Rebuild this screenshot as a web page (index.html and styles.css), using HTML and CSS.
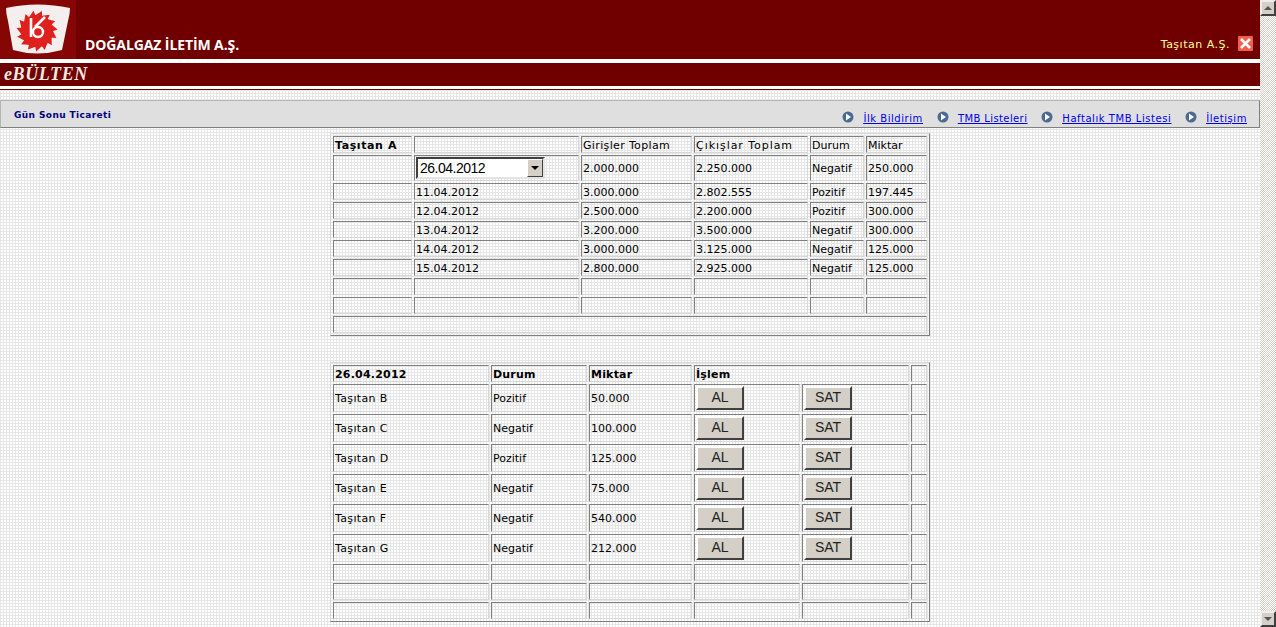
FILE: index.html
```html
<!DOCTYPE html>
<html lang="tr">
<head>
<meta charset="utf-8">
<title>eBÜLTEN</title>
<link rel="stylesheet" href="styles.css">
</head>
<body>
<div class="page">
  <header class="brand">
    <div class="logo">
      <svg width="76" height="59" viewBox="0 0 76 59">
        <rect width="76" height="59" fill="#860606"/>
        <path d="M6 8 Q37 1 70 8 Q70 14 68 21 L62 50 Q37 57 13 50 L8 21 Q6 14 6 8Z" fill="#f4eeee"/>
        <g fill="#e0201c" transform="translate(37 31)">
          <circle r="16"/>
          <path d="M-3 -15 L5 -20 L5 -14Z"/>
          <path d="M-3 -15 L5 -20 L5 -14Z" transform="rotate(24)"/>
          <path d="M-3 -15 L5 -20 L5 -14Z" transform="rotate(48)"/>
          <path d="M-3 -15 L5 -20 L5 -14Z" transform="rotate(72)"/>
          <path d="M-3 -15 L5 -20 L5 -14Z" transform="rotate(96)"/>
          <path d="M-3 -15 L5 -20 L5 -14Z" transform="rotate(120)"/>
          <path d="M-3 -15 L5 -20 L5 -14Z" transform="rotate(144)"/>
          <path d="M-3 -15 L5 -20 L5 -14Z" transform="rotate(168)"/>
          <path d="M-3 -15 L5 -20 L5 -14Z" transform="rotate(192)"/>
          <path d="M-3 -15 L5 -20 L5 -14Z" transform="rotate(216)"/>
          <path d="M-3 -15 L5 -20 L5 -14Z" transform="rotate(240)"/>
          <path d="M-3 -15 L5 -20 L5 -14Z" transform="rotate(264)"/>
          <path d="M-3 -15 L5 -20 L5 -14Z" transform="rotate(288)"/>
          <path d="M-3 -15 L5 -20 L5 -14Z" transform="rotate(312)"/>
          <path d="M-3 -15 L5 -20 L5 -14Z" transform="rotate(336)"/>
        </g>
        <g fill="none" stroke="#fff">
          <path d="M31 18 V37" stroke-width="2.6"/>
          <circle cx="38" cy="32" r="5" stroke-width="2.4"/>
          <path d="M35 27 L45 17" stroke-width="2.6"/>
        </g>
      </svg>
    </div>
    <div class="brand-name">DOĞALGAZ İLETİM A.Ş.</div>
    <div class="user">
      <span class="user-name">Taşıtan A.Ş.</span>
      <svg class="close" width="15" height="15" viewBox="0 0 15 15">
        <rect width="15" height="15" rx="1" fill="#f0604c"/>
        <path d="M3 3 L12 12 M12 3 L3 12" stroke="#fff" stroke-width="2.6"/>
      </svg>
    </div>
  </header>
  <div class="title-bar"><span class="title">eBÜLTEN</span></div>
  <nav class="toolbar">
    <div class="toolbar-title">Gün Sonu Ticareti</div>
    <div class="links">
      <a class="link" href="#"><svg class="bullet" width="12" height="12" viewBox="0 0 12 12"><circle cx="6" cy="6" r="5.5" fill="#4a6a94"/><path d="M4 2.5 L9 6 L4 9.5Z" fill="#fff"/></svg><span>İlk Bildirim</span></a>
      <a class="link link-tight" href="#"><svg class="bullet" width="12" height="12" viewBox="0 0 12 12"><circle cx="6" cy="6" r="5.5" fill="#4a6a94"/><path d="M4 2.5 L9 6 L4 9.5Z" fill="#fff"/></svg><span>TMB Listeleri</span></a>
      <a class="link" href="#"><svg class="bullet" width="12" height="12" viewBox="0 0 12 12"><circle cx="6" cy="6" r="5.5" fill="#4a6a94"/><path d="M4 2.5 L9 6 L4 9.5Z" fill="#fff"/></svg><span>Haftalık TMB Listesi</span></a>
      <a class="link" href="#"><svg class="bullet" width="12" height="12" viewBox="0 0 12 12"><circle cx="6" cy="6" r="5.5" fill="#4a6a94"/><path d="M4 2.5 L9 6 L4 9.5Z" fill="#fff"/></svg><span>İletişim</span></a>
    </div>
  </nav>
  <main class="content">
    <table class="grid grid-top">
      <colgroup><col class="t1a"><col class="t1b"><col class="t1c"><col class="t1d"><col class="t1e"><col class="t1f"></colgroup>
      <tr><th class="name-head">Taşıtan A</th><td></td><td class="sum-in">Girişler Toplam</td><td class="sum-out">Çıkışlar Toplam</td><td>Durum</td><td>Miktar</td></tr>
      <tr class="select-row"><td></td><td><div class="select"><span class="select-value">26.04.2012</span><span class="select-arrow"></span></div></td><td>2.000.000</td><td>2.250.000</td><td>Negatif</td><td>250.000</td></tr>
      <tr><td></td><td>11.04.2012</td><td>3.000.000</td><td>2.802.555</td><td>Pozitif</td><td>197.445</td></tr>
      <tr><td></td><td>12.04.2012</td><td>2.500.000</td><td>2.200.000</td><td>Pozitif</td><td>300.000</td></tr>
      <tr><td></td><td>13.04.2012</td><td>3.200.000</td><td>3.500.000</td><td>Negatif</td><td>300.000</td></tr>
      <tr><td></td><td>14.04.2012</td><td>3.000.000</td><td>3.125.000</td><td>Negatif</td><td>125.000</td></tr>
      <tr><td></td><td>15.04.2012</td><td>2.800.000</td><td>2.925.000</td><td>Negatif</td><td>125.000</td></tr>
      <tr><td></td><td></td><td></td><td></td><td></td><td></td></tr>
      <tr><td></td><td></td><td></td><td></td><td></td><td></td></tr>
      <tr><td colspan="6"></td></tr>
    </table>
    <table class="grid grid-bottom">
      <colgroup><col class="t2a"><col class="t2b"><col class="t2c"><col class="t2d"><col class="t2e"><col class="t2f"></colgroup>
      <tr><th>26.04.2012</th><th>Durum</th><th>Miktar</th><th colspan="2">İşlem</th><td></td></tr>
      <tr class="action-row"><td class="name">Taşıtan B</td><td>Pozitif</td><td>50.000</td><td><button class="btn">AL</button></td><td><button class="btn">SAT</button></td><td></td></tr>
      <tr class="action-row"><td class="name">Taşıtan C</td><td>Negatif</td><td>100.000</td><td><button class="btn">AL</button></td><td><button class="btn">SAT</button></td><td></td></tr>
      <tr class="action-row"><td class="name">Taşıtan D</td><td>Pozitif</td><td>125.000</td><td><button class="btn">AL</button></td><td><button class="btn">SAT</button></td><td></td></tr>
      <tr class="action-row"><td class="name">Taşıtan E</td><td>Negatif</td><td>75.000</td><td><button class="btn">AL</button></td><td><button class="btn">SAT</button></td><td></td></tr>
      <tr class="action-row"><td class="name">Taşıtan F</td><td>Negatif</td><td>540.000</td><td><button class="btn">AL</button></td><td><button class="btn">SAT</button></td><td></td></tr>
      <tr class="action-row"><td class="name">Taşıtan G</td><td>Negatif</td><td>212.000</td><td><button class="btn">AL</button></td><td><button class="btn">SAT</button></td><td></td></tr>
      <tr><td></td><td></td><td></td><td></td><td></td><td></td></tr>
      <tr><td></td><td></td><td></td><td></td><td></td><td></td></tr>
      <tr><td></td><td></td><td></td><td></td><td></td><td></td></tr>
    </table>
  </main>
</div>
<aside class="scrollbar">
  <div class="sb-btn"><span class="sb-up"></span></div>
  <div class="sb-btn"><span class="sb-down"></span></div>
</aside>
</body>
</html>
```
FILE: styles.css
```css
html, body {
  margin: 0;
  height: 627px;
  overflow: hidden;
}
body {
  display: flex;
  font-family: "DejaVu Sans", Verdana, sans-serif;
  font-size: 11px;
  color: #000;
}
.page {
  flex: 1;
  min-width: 0;
  background-color: #fff;
  background-image:
    linear-gradient(#e6e6e6 1px, transparent 1px),
    linear-gradient(90deg, #e6e6e6 1px, transparent 1px);
  background-size: 3px 3px;
}
.brand {
  height: 59px;
  display: flex;
  align-items: flex-end;
  background: #700000;
}
.logo { width: 76px; height: 59px; }
.logo svg { display: block; }
.brand-name {
  margin-left: 9px;
  padding-bottom: 5px;
  font: 700 14px "Open Sans", sans-serif;
  line-height: 19px;
  letter-spacing: -0.1px;
  color: #fff;
}
.user {
  margin-left: auto;
  margin-right: 7px;
  padding-bottom: 7px;
  display: flex;
  align-items: center;
  gap: 8px;
}
.user-name {
  padding-top: 3px;
  color: #ffff99;
  font-size: 11px;
  line-height: 15px;
  letter-spacing: 0.5px;
}
.close { display: block; }
.title-bar {
  height: 23px;
  margin-top: 4px;
  background: #700000;
  box-shadow: 0 -4px 0 #fff;
  display: flex;
  align-items: center;
  padding-left: 4px;
  position: relative;
}
.title-bar::after {
  content: "";
  position: absolute;
  left: 0;
  right: 0;
  top: 23px;
  height: 3px;
  background: #fff;
  border-bottom: 1px solid #700000;
}
.title {
  font: italic 700 18px "Liberation Serif", serif;
  letter-spacing: 0.6px;
  color: #f3e9e0;
}
.toolbar {
  height: 26px;
  margin-top: 14px;
  background: #dfdfdf;
  border: 1px solid;
  border-color: #b4b4b4 #808080 #808080 #b4b4b4;
  display: flex;
  align-items: center;
  justify-content: space-between;
  padding: 0 12px 0 13px;
}
.toolbar-title {
  padding-top: 1px;
  color: #00007f;
  font-size: 9px;
  font-weight: 700;
  letter-spacing: 0.4px;
}
.links { display: flex; gap: 14px; padding-top: 8px; }
.link {
  display: flex;
  align-items: center;
  gap: 9px;
  color: #0000ee;
  font-size: 10px;
  letter-spacing: 0.55px;
}
.link-tight { letter-spacing: 0.4px; }
.link span { text-decoration: underline; }
.bullet { display: block; margin-top: -2px; }
.content { padding-top: 5px; }
.grid {
  width: 600px;
  margin: 0 auto;
  table-layout: fixed;
  border-collapse: separate;
  border-spacing: 2px;
  border: 1px solid;
  border-color: #d8d8d8 #808080 #808080 #d8d8d8;
}
.grid-bottom { margin-top: 26px; }
.t1a { width: 79px; } .t1b { width: 165px; } .t1c { width: 111px; }
.t1d { width: 114px; } .t1e { width: 54px; } .t1f { width: 61px; }
.t2a { width: 156px; } .t2b { width: 96px; } .t2c { width: 103px; }
.t2d { width: 106px; } .t2e { width: 107px; } .t2f { width: 16px; }
.grid td, .grid th {
  box-sizing: border-box;
  height: 17px;
  padding: 2px 1px 0;
  border: 1px solid;
  border-color: #808080 #d8d8d8 #d8d8d8 #808080;
  font-size: 11px;
  line-height: 13px;
  text-align: left;
  white-space: nowrap;
  overflow: hidden;
}
.grid th { letter-spacing: 0.2px; }
.grid .name-head { letter-spacing: 0.6px; }
.grid .name { letter-spacing: 0.35px; }
.grid .sum-in { letter-spacing: 0.35px; }
.grid .sum-out { letter-spacing: 0.95px; }
.grid .select-row td { height: 26px; padding-top: 0; line-height: 15px; }
.grid .action-row td { height: 28px; padding-top: 0; line-height: 15px; }
.select {
  box-sizing: border-box;
  width: 129px;
  height: 22px;
  display: flex;
  align-items: center;
  justify-content: space-between;
  background: #fff;
  border: 2px solid;
  border-color: #404040 #e4e4e4 #e4e4e4 #404040;
}
.select-value {
  padding-left: 2px;
  font: 14px/18px "Liberation Sans", Arial, sans-serif;
  letter-spacing: -0.5px;
}
.select-arrow {
  box-sizing: border-box;
  width: 16px;
  height: 18px;
  background: #d4d0c8;
  border: 1px solid;
  border-color: #fff #404040 #404040 #fff;
  position: relative;
}
.select-arrow::after {
  content: "";
  position: absolute;
  left: 3px;
  top: 6px;
  border: 4px solid transparent;
  border-top-color: #000;
  border-bottom: 0;
}
.btn {
  display: block;
  box-sizing: border-box;
  width: 48px;
  height: 24px;
  padding: 0 0 2px;
  background: #d4d0c8;
  border: 2px solid;
  border-color: #fff #404040 #404040 #fff;
  font: 14px "Liberation Sans", Arial, sans-serif;
  color: #222;
}
.scrollbar {
  width: 16px;
  display: flex;
  flex-direction: column;
  justify-content: space-between;
  background-color: #fff;
  background-image:
    linear-gradient(45deg, #d4d0c8 25%, transparent 25%, transparent 75%, #d4d0c8 75%),
    linear-gradient(45deg, #d4d0c8 25%, transparent 25%, transparent 75%, #d4d0c8 75%);
  background-size: 2px 2px;
  background-position: 0 0, 1px 1px;
}
.sb-btn {
  box-sizing: border-box;
  width: 16px;
  height: 16px;
  background: #d4d0c8;
  border: 2px solid;
  border-color: #eeeeee #404040 #404040 #eeeeee;
  display: flex;
  align-items: center;
  justify-content: center;
}
.sb-up, .sb-down {
  width: 0;
  height: 0;
  border-left: 4px solid transparent;
  border-right: 4px solid transparent;
}
.sb-up { border-bottom: 4px solid #555; }
.sb-down { border-top: 4px solid #555; }
```
